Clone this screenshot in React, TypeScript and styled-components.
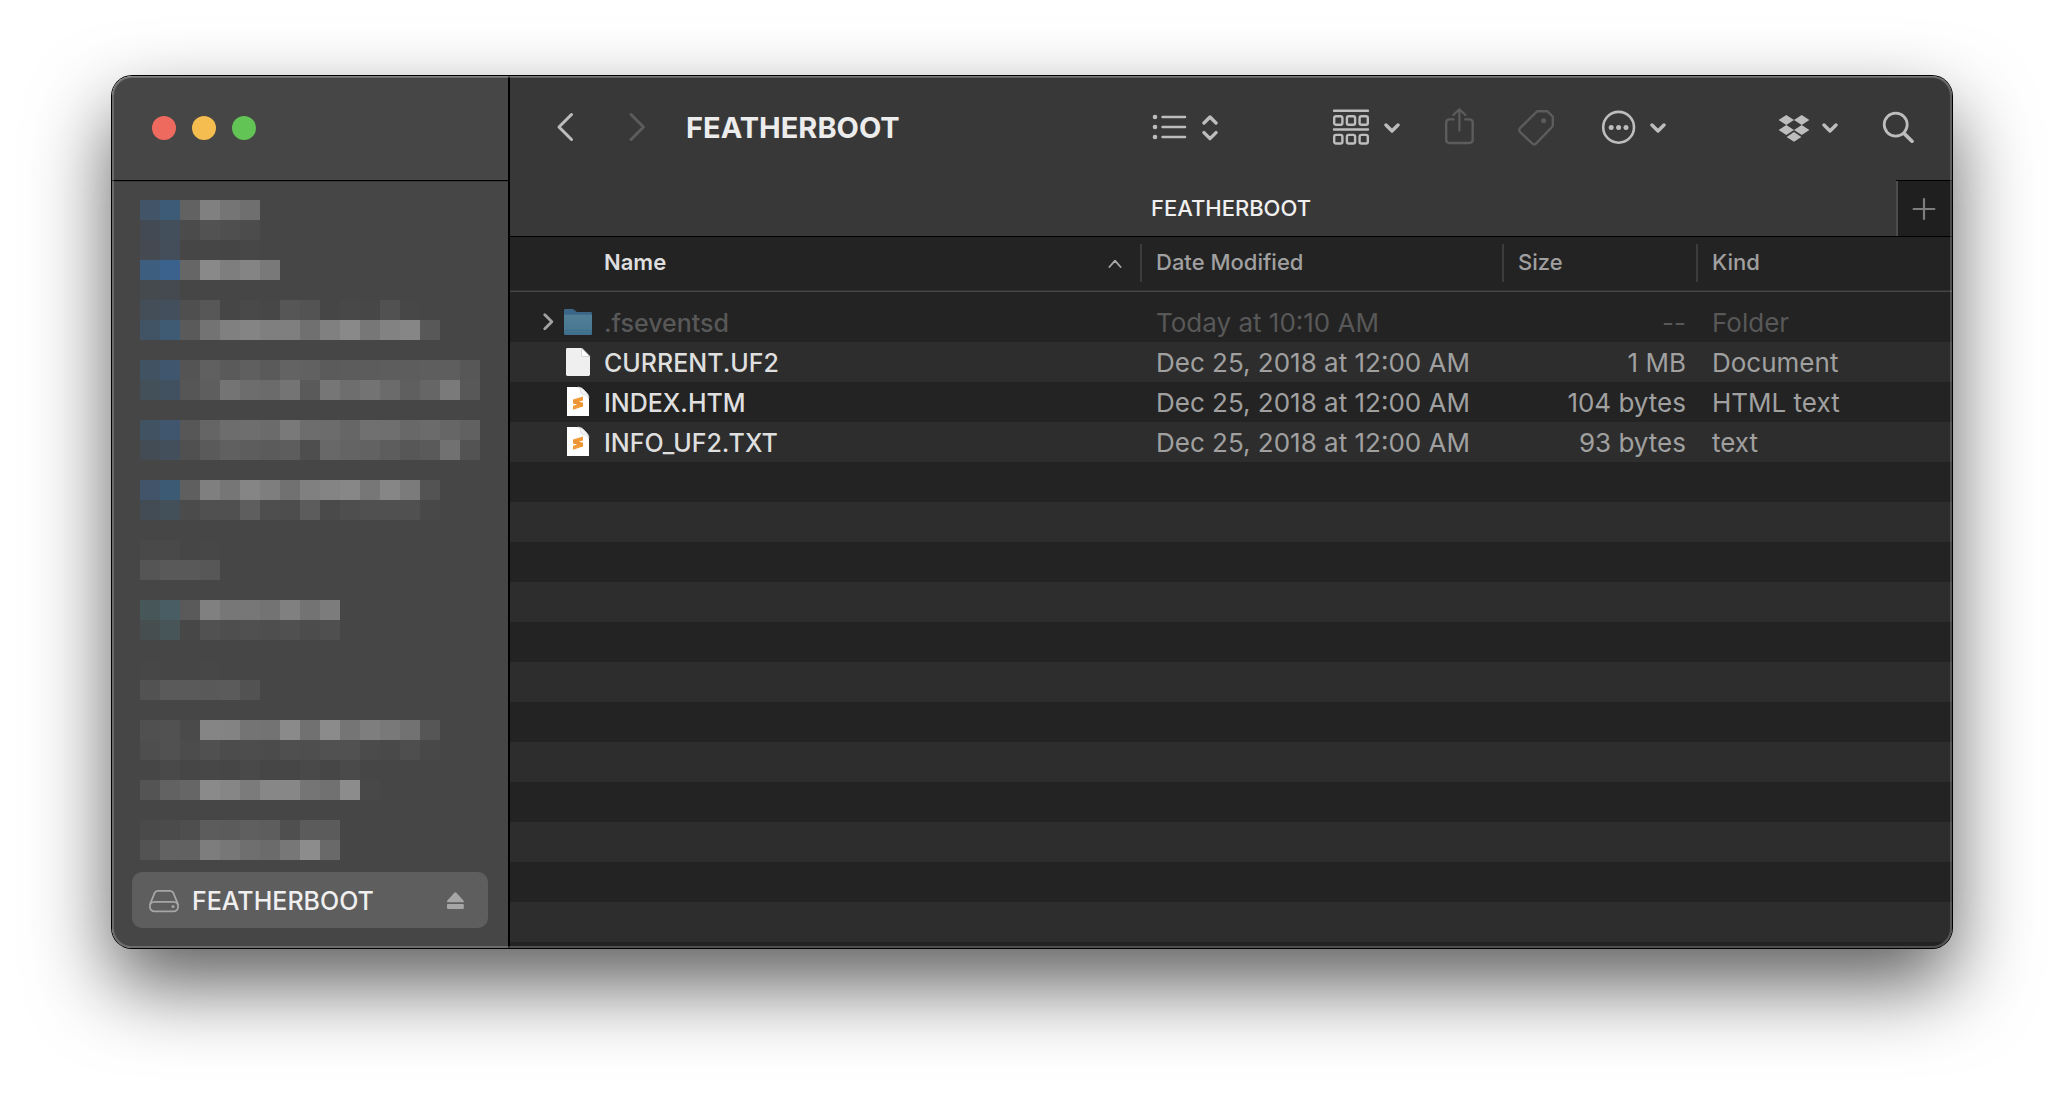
import React from "react";
import styled, { createGlobalStyle } from "styled-components";

const FONT = `Inter, "Noto Sans", "Liberation Sans", sans-serif`;

const GlobalStyle = createGlobalStyle`
  *, *::before, *::after { box-sizing: border-box; }
  body { margin: 0; background: #fff; font-family: ${FONT}; overflow: hidden; }
  button { margin: 0; padding: 0; border: 0; background: none; color: inherit; font: inherit; cursor: default; }
  svg { display: block; flex: none; }
`;

const Desktop = styled.main`
  display: flex;
  min-height: 100vh;
  padding: 76px 112px 148px;
`;

const FinderWindow = styled.section`
  position: relative;
  display: flex;
  flex: 1;
  min-width: 0;
  border-radius: 20px;
  box-shadow: 0 0 0 1px #000, 0 36px 80px rgba(0, 0, 0, 0.64);

  &::after {
    content: "";
    position: absolute;
    inset: 0;
    border-radius: inherit;
    pointer-events: none;
    box-shadow: inset 0 1px 0 rgba(255, 255, 255, 0.18), inset 0 0 0 2px rgba(255, 255, 255, 0.2);
  }
`;

const Sidebar = styled.aside`
  display: flex;
  flex-direction: column;
  flex: none;
  width: 398px;
  border-right: 2px solid #000;
  border-radius: 20px 0 0 20px;
  background: #464646;
`;

const TrafficLights = styled.div`
  display: flex;
  align-items: center;
  gap: 16px;
  height: 104px;
  padding-left: 40px;
`;

const Light = styled.button<{ $color: string }>`
  width: 24px;
  height: 24px;
  border-radius: 50%;
  background: ${(p) => p.$color};
`;

const SidebarBody = styled.nav`
  display: flex;
  flex-direction: column;
  flex: 1;
  justify-content: space-between;
  padding: 19px 20px 20px;
  border-top: 1px solid #000;
  box-shadow: inset 0 1px 0 #3a3a3a;
`;

const Mosaic = styled.div`
  display: grid;
  grid-auto-rows: 20px;
  padding-left: 8px;
`;

const MosaicRow = styled.div`
  display: flex;
`;

const MosaicCell = styled.span`
  width: 20px;
`;

const SidebarItem = styled.div`
  display: flex;
  align-items: center;
  height: 56px;
  padding: 2px 22px 0 16px;
  border-radius: 10px;
  background: #5e5e5e;
  color: #a6a6a6;
`;

const VolumeButton = styled.button`
  display: flex;
  align-items: center;
  flex: 1;
  gap: 12px;
  text-align: left;
`;

const VolumeName = styled.span`
  font-size: 25px;
  font-weight: 500;
  line-height: 32px;
  color: #efefef;
`;

const EjectButton = styled.button`
  width: 20px;
`;

const Content = styled.div`
  display: flex;
  flex-direction: column;
  flex: 1;
  min-width: 0;
  overflow: hidden;
  border-radius: 0 20px 20px 0;
  background: #232323;
`;

const Toolbar = styled.header`
  display: flex;
  align-items: center;
  gap: 112px;
  height: 104px;
  padding: 0 38px 0 44px;
  background: #383838;
  color: #bdbdbd;
`;

const NavCluster = styled.div`
  display: flex;
  align-items: center;
  flex: 1;
  gap: 36px;
`;

const NavButtons = styled.div`
  display: flex;
  gap: 48px;
`;

const Cluster = styled.div`
  display: flex;
  align-items: center;
  gap: 44px;
`;

const ToolButton = styled.button`
  display: flex;
  align-items: center;
  gap: 12px;

  &:disabled { color: #5c5c5c; }
`;

const Title = styled.h1`
  margin: 0;
  font-size: 29px;
  font-weight: 700;
  line-height: 40px;
  color: #ececec;
`;

const TabBar = styled.div`
  display: flex;
  height: 56px;
  background: #383838;
`;

const Tab = styled.button`
  flex: 1;
  padding-left: 56px;
  font-size: 22px;
  font-weight: 500;
  line-height: 28px;
  color: #f0f0f0;
`;

const NewTab = styled.button`
  display: flex;
  align-items: center;
  justify-content: center;
  width: 56px;
  border-top: 1px solid #000;
  box-shadow: inset 2px 0 0 #4c4c4c;
  background: #1f1f1f;
  color: #7d7d7d;
`;

const FileTable = styled.table`
  width: 100%;
  border-top: 1px solid #000;
  border-spacing: 0;
  table-layout: fixed;
  color: #a0a0a0;

  tbody::before {
    content: "";
    display: block;
    height: 10px;
  }
`;

const Column = styled.col<{ $width?: number }>`
  width: ${(p) => (p.$width ? `${p.$width}px` : "auto")};
`;

const HeadCell = styled.th`
  padding: 7px 0 9px;
  border-bottom: 1px solid #464646;
  box-shadow: inset 0 -1px 0 #323232;
  font-size: 22px;
  font-weight: 500;
  line-height: 28px;
  text-align: left;
`;

const SortButton = styled.button<{ $active?: boolean }>`
  display: flex;
  align-items: center;
  justify-content: space-between;
  width: 100%;
  height: 38px;
  padding: ${(p) => (p.$active ? "0 18px 2px 94px" : "0 0 2px 14px")};
  border-left: ${(p) => (p.$active ? "0" : "2px solid #3c3c3c")};
  font-weight: ${(p) => (p.$active ? 600 : 500)};
  color: ${(p) => (p.$active ? "#dedede" : "#a0a0a0")};
`;

const FileRow = styled.tr<{ $dim?: boolean }>`
  height: 40px;
  color: ${(p) => (p.$dim ? "#585858" : "inherit")};

  &:nth-child(even) { background: #2d2d2d; }
`;

const Cell = styled.td<{ $align?: string }>`
  padding: 2px 10px 0 16px;
  font-size: 26px;
  line-height: 32px;
  text-align: ${(p) => p.$align || "left"};
  white-space: nowrap;
`;

const NameCell = styled.td<{ $dim?: boolean }>`
  padding: 0 0 0 33px;
  font-size: 25px;
  font-weight: 500;
  line-height: 32px;
  color: ${(p) => (p.$dim ? "inherit" : "#dfdfdf")};
`;

const NameLayout = styled.div`
  display: grid;
  grid-template-columns: 12px 28px 1fr;
  align-items: center;
  white-space: nowrap;
`;

const Disclosure = styled.button`
  color: #a3a3a3;
`;

const IconSlot = styled.span`
  grid-column: 2;
  margin-left: 9px;
`;

const FileName = styled.span`
  grid-column: 3;
  padding: 2px 0 0 21px;
`;

const EmptyRows = styled.div`
  flex: 1;
  background: repeating-linear-gradient(#232323 0 40px, #2d2d2d 40px 80px);
`;

/* Redacted sidebar entries: one line per 20px band, two digits for a grey, six for a colour. */
const REDACTED = [
  "415468 3d5a76 62 80 75 6f",
  "444a54 434f5b 4b 52 4f 4c",
  "454952 434e5a 46 46 45 47",
  "3e5e80 3a628c 66 89 7e 84 79",
  "444a4e 444a50",
  "434e58 434f5c 4f 57 46 49 47 56 53 46 48 47 51 47",
  "415466 3f5a73 5a 73 80 84 7f 7f 70 80 89 77 82 86 58",
  "",
  "415262 40566e 54 60 5a 5f 5a 63 61 5b 5c 5c 5d 5d 5e 5e 57",
  "434f59 42515f 56 5e 74 6d 6b 74 5a 76 6e 73 6b 5f 66 7a 58",
  "",
  "415263 40566f 57 65 6d 6e 6b 79 6d 6c 66 70 6f 68 6b 66 61",
  "434c55 434f5b 50 5a 60 5d 5b 5d 4e 68 64 62 5d 57 5a 71 53",
  "",
  "41546a 3d5a75 5f 7f 76 85 7e 71 80 84 87 77 86 7b 53",
  "434b54 434f59 4b 50 50 5e 4e 4d 5c 4a 4e 50 50 50 48",
  "",
  "49 49 46 47",
  "55 59 59 57",
  "",
  "475659 485d64 5a 80 77 77 73 80 73 7c",
  "474e50 475559 47 51 4e 50 4e 50 4c 4f",
  "",
  "47 46 46 47",
  "52 5a 5a 59 5b 52",
  "",
  "50 51 4a 85 83 74 73 8a 71 8b 75 7e 79 72 56",
  "4e 51 4c 50 4c 4d 4b 4f 4e 51 51 4b 49 4e 48",
  "46 49 46 47 46 49 46 46 49 46 4a 46",
  "54 62 66 8a 86 7b 87 87 75 71 8c 48",
  "",
  "4a 4b 4e 5c 5b 5f 5d 4f 5b 5b",
  "53 62 61 7d 77 6f 6b 77 8c 69",
].map((line) =>
  line.split(" ").filter(Boolean).map((v) => `#${v.length === 2 ? v.repeat(3) : v}`)
);

type IconProps = { w: number; h: number; sw?: number; children: React.ReactNode };

const Icon = ({ w, h, sw = 3, children }: IconProps) => (
  <svg width={w} height={h} viewBox={`0 0 ${w} ${h}`} fill="none" stroke="currentColor"
    strokeWidth={sw} strokeLinecap="round" strokeLinejoin="round" aria-hidden="true">
    {children}
  </svg>
);

const ChevronDown = () => (
  <Icon w={16} h={32} sw={3.4}><path d="M2 13L8 19L14 13" /></Icon>
);

const Back = () => <Icon w={24} h={32}><path d="M17.5 2.5L5 15L17.5 27.5" /></Icon>;
const Forward = () => <Icon w={24} h={32}><path d="M5 2.5L17.5 15L5 27.5" /></Icon>;

const ListIcon = () => (
  <Icon w={38} h={32} sw={2.6}>
    <path d="M10.6 5H33M10.6 15H33M10.6 25H33" />
    <g fill="currentColor" stroke="none">
      <circle cx="3" cy="5" r="2.3" /><circle cx="3" cy="15" r="2.3" /><circle cx="3" cy="25" r="2.3" />
    </g>
  </Icon>
);

const UpDown = () => (
  <Icon w={16} h={32} sw={3.4}><path d="M2 11L8 5L14 11M2 20.6L8 26.6L14 20.6" /></Icon>
);

const GroupIcon = () => (
  <Icon w={42} h={40} sw={2.4}>
    <path d="M4 2.8H38M4 21.5H38" />
    {[8.2, 26.9].map((y) =>
      [4.2, 16.9, 29.6].map((x) => <rect key={`${x}-${y}`} x={x} y={y} width="8.2" height="8.6" rx="1.8" />)
    )}
  </Icon>
);

const ShareIcon = () => (
  <Icon w={30} h={40} sw={2.4}>
    <path d="M9.5 11.4H5.5Q2.2 11.4 2.2 14.7V31.6Q2.2 35 5.5 35H25.3Q28.7 35 28.7 31.6V14.7Q28.7 11.4 25.3 11.4H21.3" />
    <path d="M15.4 22.6V1.6M9.4 7L15.4 1.2L21.4 7" strokeWidth="2.2" />
  </Icon>
);

const TagIcon = () => (
  <Icon w={36} h={40} sw={2.4}>
    <path d="M20.5 3.2H29.2L34.8 8.6V17Q34.8 18.2 33.9 19.1L18.2 35.4Q16.2 37.4 14.2 35.4L2.2 24.2Q0.4 22.2 2 20.2L18.4 4Q19.2 3.2 20.5 3.2Z" />
    <circle cx="25.6" cy="12.7" r="2.5" fill="currentColor" stroke="none" />
  </Icon>
);

const MoreIcon = () => (
  <Icon w={40} h={40} sw={2.6}>
    <circle cx="20.6" cy="19.3" r="15.4" />
    <g fill="currentColor" stroke="none">
      <circle cx="13.2" cy="19.4" r="2.5" /><circle cx="20.6" cy="19.4" r="2.5" /><circle cx="28" cy="19.4" r="2.5" />
    </g>
  </Icon>
);

const DropboxIcon = () => (
  <svg width="32" height="32" viewBox="0 0 32 32" fill="currentColor" aria-hidden="true">
    <path d="M8.3 3L16 7.9L8.3 12.9L.6 7.9ZM23.7 3L31.4 7.9L23.7 12.9L16 7.9ZM8.3 13.1L16 18.1L8.3 23L.6 18.1ZM23.7 13.1L31.4 18.1L23.7 23L16 18.1ZM16 20L23.4 24.9L16 29.8L8.6 24.9Z" />
  </svg>
);

const SearchIcon = () => (
  <Icon w={32} h={40} sw={2.8}>
    <circle cx="13.7" cy="16.6" r="11.5" />
    <path d="M22 25.4L30 33.2" strokeWidth="3.6" />
  </Icon>
);

const DriveIcon = () => (
  <Icon w={32} h={24} sw={1.8}>
    <path d="M2 15.4L6.6 4Q7.6 1.9 9.8 1.9H22.2Q24.4 1.9 25.4 4L30 15.4" />
    <rect x="1.9" y="12.8" width="28.2" height="9.6" rx="4.6" />
    <circle cx="25" cy="17.4" r="1.5" fill="currentColor" stroke="none" />
  </Icon>
);

const EjectIcon = () => (
  <svg width="20" height="24" viewBox="0 0 20 24" fill="currentColor" aria-hidden="true">
    <path d="M8.4 3.8Q9.4 2.8 10.4 3.8L17.4 11.4Q18.6 13.2 16.6 13.2H2.2Q.2 13.2 1.4 11.4Z" />
    <rect x="1" y="15" width="16.8" height="5" rx="1" />
  </svg>
);

const FolderIcon = () => (
  <svg width="28" height="32" viewBox="0 0 28 32" aria-hidden="true">
    <defs>
      <linearGradient id="folder-face" x1="0" y1="0" x2="0" y2="1">
        <stop offset="0" stopColor="#527e97" /><stop offset="1" stopColor="#447690" />
      </linearGradient>
    </defs>
    <path d="M0 4.4Q0 3 1.4 3H8.4Q9.4 3 10.2 3.8L12.2 5.4Q12.8 6 13.8 6H26.6Q28 6 28 7.4V27.6Q28 29 26.6 29H1.4Q0 29 0 27.6Z" fill="#3b6688" />
    <path d="M0 9Q0 8.8 1.2 8.8H26.8Q28 8.8 28 9.6V27.4Q28 28.6 26.6 28.6H1.4Q0 28.6 0 27.4Z" fill="url(#folder-face)" />
    <path d="M0 24.4H28M0 26.8H28" stroke="#3a6a86" strokeWidth="0.8" />
  </svg>
);

const DocumentIcon = () => (
  <svg width="28" height="32" viewBox="0 0 28 32" aria-hidden="true">
    <path d="M3.4 2H17.6L26 10.6V28.6Q26 30 24.6 30H3.4Q2 30 2 28.6V3.4Q2 2 3.4 2Z" fill="#efefef" />
    <path d="M17.6 2L26 10.6H19Q17.6 10.6 17.6 9.2Z" fill="#fff" stroke="#c9c9c9" strokeWidth="0.8" />
  </svg>
);

const SublimeIcon = () => (
  <svg width="28" height="32" viewBox="0 0 28 32" aria-hidden="true">
    <path d="M3 1H14Q18 1.4 20 4L22.4 6.6Q25 9 25 13V30H3Z" fill="#fff" />
    <path d="M14 1Q17 2 17 7.6Q22 7.6 25 12Q25 9 22.4 6.6L20 4Q18 1.4 14 1Z" fill="#f4f4f4" stroke="#d2d2d2" strokeWidth="0.7" />
    <path d="M9 13.6L19 10.4V14.4L14.6 15.8L19 17V20.6L9 23.8V19.8L13.6 18.4L9 17.2Z" fill="#f29b3a" />
    <path d="M9 13.8L19 17V20.6L9 17.2Z" fill="#ec9434" />
  </svg>
);

const ICONS = { folder: FolderIcon, document: DocumentIcon, sublime: SublimeIcon };

type FileEntry = {
  name: string; date: string; size: string; kind: string; icon: keyof typeof ICONS; hidden?: boolean;
};

const FILES: FileEntry[] = [
  { name: ".fseventsd", date: "Today at 10:10 AM", size: "--", kind: "Folder", icon: "folder", hidden: true },
  { name: "CURRENT.UF2", date: "Dec 25, 2018 at 12:00 AM", size: "1 MB", kind: "Document", icon: "document" },
  { name: "INDEX.HTM", date: "Dec 25, 2018 at 12:00 AM", size: "104 bytes", kind: "HTML text", icon: "sublime" },
  { name: "INFO_UF2.TXT", date: "Dec 25, 2018 at 12:00 AM", size: "93 bytes", kind: "text", icon: "sublime" },
];

export default function App() {
  return (
    <>
      <GlobalStyle />
      <Desktop>
        <FinderWindow>
          <Sidebar>
            <TrafficLights>
              <Light $color="#ee6a5f" aria-label="Close" />
              <Light $color="#f5bd4f" aria-label="Minimize" />
              <Light $color="#61c455" aria-label="Zoom" />
            </TrafficLights>
            <SidebarBody>
              <Mosaic aria-hidden="true">
                {REDACTED.map((row, y) => (
                  <MosaicRow key={y}>
                    {row.map((color, x) => <MosaicCell key={x} style={{ background: color }} />)}
                  </MosaicRow>
                ))}
              </Mosaic>
              <SidebarItem>
                <VolumeButton><DriveIcon /><VolumeName>FEATHERBOOT</VolumeName></VolumeButton>
                <EjectButton aria-label="Eject"><EjectIcon /></EjectButton>
              </SidebarItem>
            </SidebarBody>
          </Sidebar>
          <Content>
            <Toolbar>
              <NavCluster>
                <NavButtons>
                  <ToolButton aria-label="Back"><Back /></ToolButton>
                  <ToolButton aria-label="Forward" disabled><Forward /></ToolButton>
                </NavButtons>
                <Title>FEATHERBOOT</Title>
              </NavCluster>
              <Cluster>
                <ToolButton aria-label="View"><ListIcon /><UpDown /></ToolButton>
              </Cluster>
              <Cluster>
                <ToolButton aria-label="Group"><GroupIcon /><ChevronDown /></ToolButton>
                <ToolButton aria-label="Share" disabled><ShareIcon /></ToolButton>
                <ToolButton aria-label="Edit Tags" disabled><TagIcon /></ToolButton>
                <ToolButton aria-label="Action"><MoreIcon /><ChevronDown /></ToolButton>
              </Cluster>
              <Cluster>
                <ToolButton aria-label="Dropbox"><DropboxIcon /><ChevronDown /></ToolButton>
                <ToolButton aria-label="Search"><SearchIcon /></ToolButton>
              </Cluster>
            </Toolbar>
            <TabBar>
              <Tab>FEATHERBOOT</Tab>
              <NewTab aria-label="New Tab">
                <Icon w={24} h={24} sw={2.2}><path d="M1.6 12H22.4M12 2V22" /></Icon>
              </NewTab>
            </TabBar>
            <FileTable>
              <colgroup>
                <Column /><Column $width={362} /><Column $width={194} /><Column $width={256} />
              </colgroup>
              <thead>
                <tr>
                  <HeadCell aria-sort="ascending">
                    <SortButton $active>
                      Name
                      <Icon w={14} h={12} sw={1.8}><path d="M1.4 11L7 4.6L12.6 11" stroke="#a8a8a8" /></Icon>
                    </SortButton>
                  </HeadCell>
                  <HeadCell><SortButton>Date Modified</SortButton></HeadCell>
                  <HeadCell><SortButton>Size</SortButton></HeadCell>
                  <HeadCell><SortButton>Kind</SortButton></HeadCell>
                </tr>
              </thead>
              <tbody>
                {FILES.map((file) => {
                  const FileIcon = ICONS[file.icon];
                  return (
                    <FileRow key={file.name} $dim={file.hidden}>
                      <NameCell $dim={file.hidden}>
                        <NameLayout>
                          {file.hidden && (
                            <Disclosure aria-label={`Expand ${file.name}`}>
                              <Icon w={12} h={20} sw={2.8}><path d="M1.8 2.8L8.8 9.8L1.8 16.8" /></Icon>
                            </Disclosure>
                          )}
                          <IconSlot><FileIcon /></IconSlot>
                          <FileName>{file.name}</FileName>
                        </NameLayout>
                      </NameCell>
                      <Cell>{file.date}</Cell>
                      <Cell $align="right">{file.size}</Cell>
                      <Cell>{file.kind}</Cell>
                    </FileRow>
                  );
                })}
              </tbody>
            </FileTable>
            <EmptyRows />
          </Content>
        </FinderWindow>
      </Desktop>
    </>
  );
}
